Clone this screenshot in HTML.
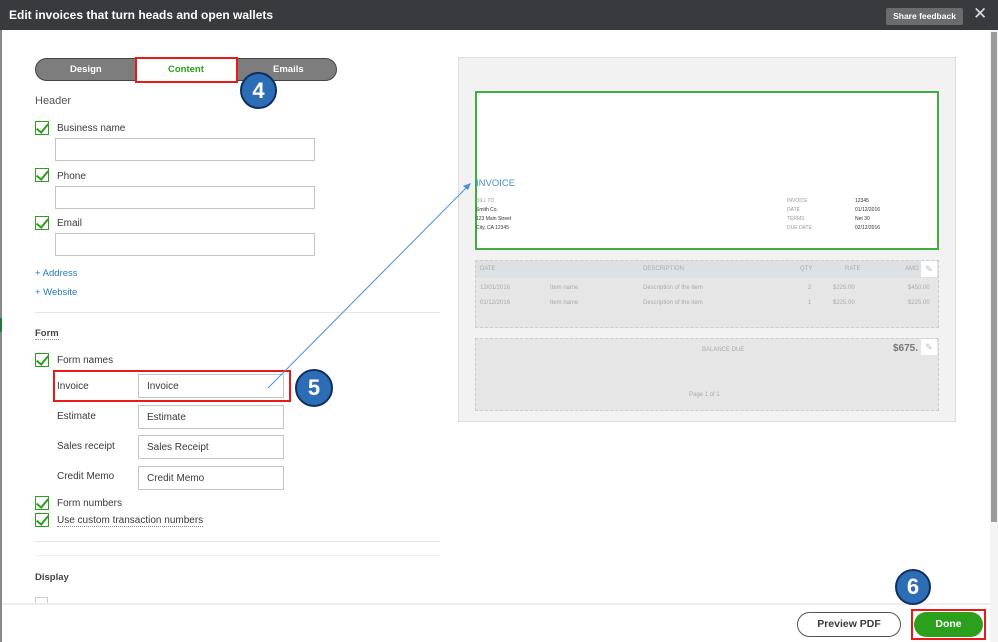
<!DOCTYPE html>
<html><head><style>
*{box-sizing:border-box;margin:0;padding:0}
body{width:998px;height:642px;overflow:hidden;background:#fff;font-family:"Liberation Sans",sans-serif;position:relative;color:#393a3d}
.a{position:absolute}
.cb{position:absolute;width:14px;height:14px;border:1.5px solid #2ca01c;background:#fff}
.cb::after{content:"";position:absolute;left:3px;top:-1px;width:5px;height:10px;border:solid #2ca01c;border-width:0 2.5px 2.5px 0;transform:rotate(40deg)}
.lbl{position:absolute;font-size:10px;color:#393a3d}
.in{position:absolute;border:1px solid #c4c4c4;background:#fff;font-size:10px;padding:0 8px;display:flex;align-items:center;color:#393a3d}
.circ{position:absolute;border-radius:50%;background:#2d6db5;border:2px solid #0f2f63;color:#fff;font-weight:bold;font-size:22px;display:flex;align-items:center;justify-content:center}
.t{position:absolute;font-size:5px;color:#333}
.g{position:absolute;font-size:6px;color:#aaa}
</style></head><body>
<div class="a" style="left:0;top:0;width:998px;height:30px;background:#393a3d"></div>
<div class="a" style="left:9px;top:8px;font-size:12px;color:#fff;font-weight:bold">Edit invoices that turn heads and open wallets</div>
<div class="a" style="left:886px;top:8px;width:77px;height:17px;background:#6b6c6e;border-radius:2px;color:#fff;font-size:8.5px;font-weight:bold;text-align:center;line-height:17px">Share feedback</div>
<div class="a" style="left:973px;top:4px;color:#ddd;font-size:17px">✕</div>
<div class="a" style="left:0;top:30px;width:2px;height:612px;background:#888"></div>
<div class="a" style="left:0;top:318px;width:2px;height:14px;background:#217a3a"></div>
<div class="a" style="left:990px;top:30px;width:8px;height:612px;background:#f4f4f4"></div>
<div class="a" style="left:991px;top:32px;width:6px;height:490px;background:#9b9b9b"></div>

<div class="a" style="left:35px;top:58px;width:302px;height:23px;background:#7d7d7d;border:1px solid #444;border-radius:12px"></div>
<div class="a" style="left:70px;top:64px;color:#fff;font-size:9.5px;font-weight:bold">Design</div>
<div class="a" style="left:273px;top:64px;color:#fff;font-size:9.5px;font-weight:bold">Emails</div>
<div class="a" style="left:135px;top:57px;width:103px;height:26px;background:#fff;border:2px solid #e61a1a"></div>
<div class="a" style="left:168px;top:64px;color:#2ca01c;font-size:9.5px;font-weight:bold">Content</div>
<div class="circ" style="left:240px;top:72px;width:37px;height:37px">4</div>

<div class="a" style="left:35px;top:95px;font-size:11px;color:#555">Header</div>
<div class="cb" style="left:35px;top:121px"></div><div class="lbl" style="left:57px;top:123px">Business name</div>
<div class="in" style="left:55px;top:138px;width:260px;height:23px"></div>
<div class="cb" style="left:35px;top:168px"></div><div class="lbl" style="left:57px;top:171px">Phone</div>
<div class="in" style="left:55px;top:186px;width:260px;height:23px"></div>
<div class="cb" style="left:35px;top:216px"></div><div class="lbl" style="left:57px;top:218px">Email</div>
<div class="in" style="left:55px;top:233px;width:260px;height:23px"></div>
<div class="a" style="left:35px;top:268px;font-size:9.5px;color:#1f7cc1">+ Address</div>
<div class="a" style="left:35px;top:287px;font-size:9.5px;color:#1f7cc1">+ Website</div>
<div class="a" style="left:35px;top:312px;width:405px;height:1px;background:#e6e6e6"></div>

<div class="a" style="left:35px;top:328px;font-size:9.5px;font-weight:bold;color:#444;border-bottom:1px dotted #888">Form</div>
<div class="cb" style="left:35px;top:353px"></div><div class="lbl" style="left:57px;top:355px">Form names</div>
<div class="a" style="left:53px;top:370px;width:238px;height:32px;border:2px solid #e61a1a"></div>
<div class="lbl" style="left:57px;top:381px">Invoice</div>
<div class="in" style="left:138px;top:374px;width:146px;height:24px">Invoice</div>
<div class="lbl" style="left:57px;top:411px">Estimate</div>
<div class="in" style="left:138px;top:405px;width:146px;height:24px">Estimate</div>
<div class="lbl" style="left:57px;top:441px">Sales receipt</div>
<div class="in" style="left:138px;top:435px;width:146px;height:24px">Sales Receipt</div>
<div class="lbl" style="left:57px;top:471px">Credit Memo</div>
<div class="in" style="left:138px;top:466px;width:146px;height:24px">Credit Memo</div>
<div class="circ" style="left:295px;top:369px;width:38px;height:38px">5</div>
<div class="cb" style="left:35px;top:496px"></div><div class="lbl" style="left:57px;top:498px">Form numbers</div>
<div class="cb" style="left:35px;top:513px"></div><div class="lbl" style="left:57px;top:515px;border-bottom:1px dotted #888">Use custom transaction numbers</div>
<div class="a" style="left:35px;top:541px;width:405px;height:1px;background:#e6e6e6"></div>
<div class="a" style="left:35px;top:555px;width:405px;height:1px;background:#eee"></div>
<div class="a" style="left:35px;top:572px;font-size:9.5px;font-weight:bold;color:#444">Display</div>
<div class="a" style="left:35px;top:597px;width:13px;height:6px;border:1px solid #ccc;border-bottom:0"></div>

<div class="a" style="left:2px;top:603px;width:988px;height:2px;background:#eee"></div>
<div class="a" style="left:797px;top:612px;width:104px;height:25px;border:1px solid #555;border-radius:13px;font-size:10.5px;font-weight:bold;text-align:center;line-height:23px;color:#393a3d">Preview PDF</div>
<div class="a" style="left:911px;top:609px;width:75px;height:31px;border:2px solid #e61a1a"></div>
<div class="a" style="left:914px;top:612px;width:69px;height:25px;background:#2ca01c;border-radius:13px;color:#fff;font-size:10.5px;font-weight:bold;text-align:center;line-height:25px">Done</div>
<div class="circ" style="left:895px;top:569px;width:36px;height:36px">6</div>

<div class="a" style="left:458px;top:57px;width:498px;height:365px;background:#f2f2f2;border:1px solid #ddd"></div>
<div class="a" style="left:475px;top:91px;width:464px;height:159px;background:#fff;border:2px solid #3fae3f"></div>
<div class="a" style="left:476px;top:178px;font-size:9.5px;color:#4a90c8">INVOICE</div>
<div class="t" style="left:476px;top:198px;color:#999">BILL TO</div>
<div class="t" style="left:476px;top:207px">Smith Co.</div>
<div class="t" style="left:476px;top:216px">123 Main Street</div>
<div class="t" style="left:476px;top:225px">City, CA 12345</div>
<div class="t" style="left:787px;top:198px;color:#999">INVOICE</div>
<div class="t" style="left:787px;top:207px;color:#999">DATE</div>
<div class="t" style="left:787px;top:216px;color:#999">TERMS</div>
<div class="t" style="left:787px;top:225px;color:#999">DUE DATE</div>
<div class="t" style="left:855px;top:198px">12345</div>
<div class="t" style="left:855px;top:207px">01/12/2016</div>
<div class="t" style="left:855px;top:216px">Net 30</div>
<div class="t" style="left:855px;top:225px">02/12/2016</div>

<div class="a" style="left:475px;top:260px;width:464px;height:68px;background:#e6e6e6;border:1px dashed #ccc"></div>
<div class="a" style="left:476px;top:261px;width:462px;height:17px;background:#dde1e4"></div>
<div class="g" style="left:480px;top:266px">DATE</div><div class="g" style="left:643px;top:266px">DESCRIPTION</div><div class="g" style="left:800px;top:266px">QTY</div><div class="g" style="left:845px;top:266px">RATE</div><div class="g" style="left:905px;top:266px">AMO</div>
<div class="a" style="left:921px;top:261px;width:16px;height:16px;background:#fff;color:#bbb;font-size:9px;text-align:center;line-height:16px">✎</div>
<div class="g" style="left:480px;top:285px">12/01/2016</div><div class="g" style="left:550px;top:285px">Item name</div><div class="g" style="left:643px;top:285px">Description of the item</div><div class="g" style="left:808px;top:285px">2</div><div class="g" style="left:833px;top:285px">$225.00</div><div class="g" style="left:908px;top:285px">$450.00</div>
<div class="g" style="left:480px;top:300px">01/12/2016</div><div class="g" style="left:550px;top:300px">Item name</div><div class="g" style="left:643px;top:300px">Description of the item</div><div class="g" style="left:808px;top:300px">1</div><div class="g" style="left:833px;top:300px">$225.00</div><div class="g" style="left:908px;top:300px">$225.00</div>

<div class="a" style="left:475px;top:338px;width:464px;height:73px;background:#e6e6e6;border:1px dashed #ccc"></div>
<div class="g" style="left:702px;top:347px">BALANCE DUE</div>
<div class="a" style="left:893px;top:343px;font-size:10px;font-weight:bold;color:#777">$675.</div>
<div class="a" style="left:921px;top:339px;width:16px;height:16px;background:#fff;color:#bbb;font-size:9px;text-align:center;line-height:16px">✎</div>
<div class="g" style="left:689px;top:392px">Page 1 of 1</div>

<svg class="a" style="left:0;top:0" width="998" height="642"><line x1="268" y1="388" x2="470" y2="184" stroke="#4a90d9" stroke-width="1"/><path d="M471 183 L463 186 L468 190 Z" fill="#4a90d9"/></svg>
</body></html>
